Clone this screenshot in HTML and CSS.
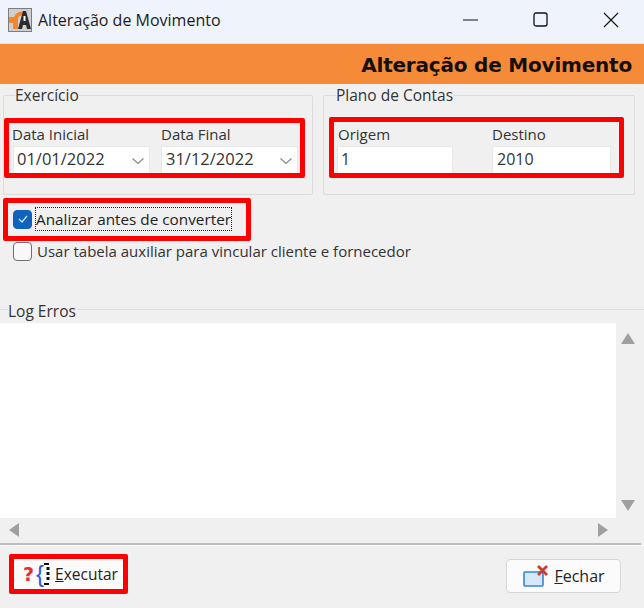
FILE: index.html
```html
<!DOCTYPE html>
<html lang="pt-BR">
<head>
    <meta charset="UTF-8">
    <meta name="viewport" content="width=device-width, initial-scale=1.0">
    <title>Alteração de Movimento</title>
    <link rel="stylesheet" href="styles.css">
</head>
<body>
    <div class="window">
        <div class="titlebar">
            <svg class="app-icon" width="24" height="24" viewBox="0 0 24 24">
                <rect width="24" height="24" fill="#7d7d7d"/>
                <rect x="1" y="1" width="22" height="22" fill="#cfcfcf"/>
                <path d="M1 9h5a8 8 0 0 1 12-4l-2 3a4 4 0 0 0-6 4v9H5v-6H1z" fill="#f2872e"/>
                <path d="M10 21L15 3h3l5 18h-4l-1-4h-3l-1 4z" fill="#2b2b33"/>
                <rect x="15.500" y="8" width="2" height="5" fill="#fff"/>
            </svg>
            <span class="title-text">Alteração de Movimento</span>
            <div class="window-controls">
                <svg width="16" height="16" viewBox="0 0 16 16"><path d="M0 8h15" stroke="#111" fill="none"/></svg>
                <svg width="16" height="16" viewBox="0 0 16 16"><rect x="1" y="1" width="13" height="13" rx="2" stroke="#111" stroke-width="1.300" fill="none"/></svg>
                <svg width="16" height="16" viewBox="0 0 16 16"><path d="M1 1l14 14M15 1L1 15" stroke="#111" stroke-width="1.100" fill="none"/></svg>
            </div>
        </div>

        <div class="banner">Alteração de Movimento</div>

        <div class="groups">
            <fieldset class="group group-exercicio">
                <legend>Exercício</legend>
                <div class="field date-inicial">
                    <label>Data Inicial</label>
                    <div class="input date-input">01/01/2022
                        <svg class="chevron" width="12" height="6" viewBox="0 0 12 6"><path d="M0.500 0.500l5.500 5 5.500-5" stroke="#858585" stroke-width="1.100" fill="none"/></svg>
                    </div>
                </div>
                <div class="field date-final">
                    <label>Data Final</label>
                    <div class="input date-input">31/12/2022
                        <svg class="chevron" width="12" height="6" viewBox="0 0 12 6"><path d="M0.500 0.500l5.500 5 5.500-5" stroke="#858585" stroke-width="1.100" fill="none"/></svg>
                    </div>
                </div>
            </fieldset>

            <fieldset class="group group-plano">
                <legend>Plano de Contas</legend>
                <div class="field origem">
                    <label>Origem</label>
                    <div class="input">1</div>
                </div>
                <div class="field destino">
                    <label>Destino</label>
                    <div class="input">2010</div>
                </div>
            </fieldset>
        </div>

        <div class="options">
            <div class="option">
                <span class="check checked">
                    <svg width="12" height="10" viewBox="0 0 12 10"><path d="M2 5l3 3 5-6" stroke="#cfe0f5" stroke-width="1.300" fill="none"/></svg>
                </span>
                <span class="focused">Analizar antes de converter</span>
            </div>
            <div class="option">
                <span class="check"></span>
                <span class="option-text">Usar tabela auxiliar para vincular cliente e fornecedor</span>
            </div>
        </div>

        <div class="log-header"><span>Log Erros</span></div>

        <div class="log">
            <div class="log-top">
                <div class="log-text"></div>
                <div class="vscroll">
                    <span class="arrow-up"></span>
                    <span class="arrow-down"></span>
                </div>
            </div>
            <div class="hscroll">
                <span class="arrow-left"></span>
                <span class="arrow-right"></span>
            </div>
        </div>

        <div class="footer">
            <div class="btn-run">
                <span class="run-q">?</span><span class="run-b">{</span>
                <svg class="run-d" width="6" height="22" viewBox="0 0 6 22">
                    <path d="M0 1h5M0 21h5" stroke="#111" stroke-width="2"/>
                    <path d="M4 4v15" stroke="#111" stroke-width="3" stroke-dasharray="3 2"/>
                </svg>
                <span class="btn-label"><u>E</u>xecutar</span>
            </div>
            <div class="btn-close">
                <svg width="26" height="22" viewBox="0 0 26 22">
                    <rect x="1" y="7" width="19" height="14" rx="1" fill="#d6e8fa" stroke="#2f86d8" stroke-width="1.600"/>
                    <path d="M15 1l9 9M24 1l-9 9" stroke="#cf3a2e" stroke-width="2.800" fill="none"/>
                </svg>
                <span class="btn-label"><u>F</u>echar</span>
            </div>
        </div>

        <!-- marcacoes vermelhas do print -->
        <div class="mark mark-datas"></div>
        <div class="mark mark-plano"></div>
        <div class="mark mark-analisar"></div>
        <div class="mark mark-executar"></div>
    </div>
</body>
</html>
```

FILE: styles.css
```css
/* Janela */
html, body {
    margin: 0;
    padding: 0;
}

body {
    font-family: "Open Sans", "Noto Sans", sans-serif;
    font-size: 15px;
    color: #222;
    background-color: #f0f0f0;
}

.window {
    position: relative;
    width: 644px;
    height: 608px;
    overflow: hidden;
    display: flex;
    flex-direction: column;
    background-color: #f0f0f0;
}

/* Barra de titulo */
.titlebar {
    height: 39px;
    display: flex;
    align-items: center;
    padding: 0 0 4px 8px;
    background-color: #eff3fb;
    border-bottom: 1px solid #f8d9bd;
}

.app-icon {
    margin-right: 6px;
}

.title-text {
    font-size: 16px;
    color: #1c1c1c;
}

.window-controls {
    margin-left: auto;
    display: flex;
    gap: 54px;
    padding-right: 25px;
}

/* Faixa laranja */
.banner {
    height: 40px;
    line-height: 43px;
    padding-right: 12px;
    text-align: right;
    font-family: "DejaVu Sans", sans-serif;
    font-weight: bold;
    font-size: 20px;
    letter-spacing: -0.2px;
    color: #141008;
    background-color: #f58a38;
}

/* Grupos */
.groups {
    display: flex;
    gap: 10px;
    padding: 1px 9px 0 3px;
}

.group {
    margin: 0;
    padding: 19px 0 0 0;
    height: 110px;
    box-sizing: border-box;
    display: flex;
    border: 1px solid #dcdcdc;
    border-radius: 2px;
}

.group legend {
    padding: 0;
    font-size: 15.500px;
    line-height: 20px;
    color: #333;
}

.group-exercicio {
    width: 310px;
    gap: 12px;
}

.group-exercicio legend {
    margin-left: 11px;
}

.group-plano {
    width: 312px;
    gap: 40px;
}

.group-plano legend {
    margin-left: 12px;
}

.date-inicial {
    margin-left: 8px;
}

.origem {
    margin-left: 14px;
}

.field label {
    display: block;
    font-size: 15px;
    line-height: 20px;
    color: #333;
}

.input {
    box-sizing: border-box;
    height: 27px;
    line-height: 24px;
    padding-left: 3px;
    margin-top: 3px;
    background-color: #fff;
    color: #333;
    font-size: 16px;
    position: relative;
    box-shadow: 0 0 0 1px #e8e8e8;
}

.date-input {
    width: 135px;
    margin-left: 2px;
    font-size: 16.500px;
}

.date-final .date-input {
    margin-left: 1px;
    padding-left: 4px;
}

.origem .input {
    width: 114px;
}

.destino .input {
    width: 117px;
    margin-left: 1px;
    padding-left: 4px;
}

.chevron {
    position: absolute;
    right: 5px;
    top: 11px;
}

/* Opcoes */
.options {
    padding: 8px 0 0 13px;
}

.option {
    display: flex;
    align-items: center;
    height: 32px;
    color: #333;
}

.check {
    box-sizing: border-box;
    width: 19px;
    height: 19px;
    margin-right: 4px;
    display: flex;
    align-items: center;
    justify-content: center;
    background-color: #f8f8f8;
    border: 1.500px solid #6f6f6f;
    border-radius: 4px;
}

.check.checked {
    background-color: #0f62be;
    border-color: #0f62be;
}

.focused {
    outline: 1px dotted #222;
    line-height: 22px;
    font-size: 15.300px;
    color: #222;
}

.option-text {
    margin-left: 1px;
}

/* Log */
.log-header {
    margin-top: 33px;
    height: 23px;
    padding-left: 8px;
    font-size: 15.500px;
    color: #333;
    background: linear-gradient(#dedede, #dedede) no-repeat 0 9px / 100% 1px;
}

.log-header span {
    display: inline-block;
    background-color: #f0f0f0;
    padding-right: 1px;
    line-height: 20px;
}

.log {
    display: flex;
    flex-direction: column;
    height: 220px;
    border-bottom: 2px solid #bcbcbc;
    margin-right: 3px;
}

.log-top {
    flex: 1;
    display: flex;
}

.log-text {
    flex: 1;
    background-color: #fff;
}

.vscroll {
    width: 25px;
    position: relative;
    background-color: #f0f0f0;
}

.hscroll {
    height: 25px;
    position: relative;
    background-color: #f0f0f0;
}

.arrow-up,
.arrow-down,
.arrow-left,
.arrow-right {
    position: absolute;
    width: 0;
    height: 0;
    border-style: solid;
    border-color: transparent;
}

.arrow-up {
    top: 10px;
    left: 5px;
    border-width: 0 7px 11px 7px;
    border-bottom-color: #a0a0a0;
}

.arrow-down {
    bottom: 7px;
    left: 5px;
    border-width: 11px 7px 0 7px;
    border-top-color: #a0a0a0;
}

.arrow-left {
    top: 5px;
    left: 9px;
    border-width: 7px 10px 7px 0;
    border-right-color: #a0a0a0;
}

.arrow-right {
    top: 5px;
    left: 598px;
    border-width: 7px 0 7px 10px;
    border-left-color: #a0a0a0;
}

/* Rodape */
.footer {
    flex: 1;
    display: flex;
    justify-content: space-between;
    align-items: flex-start;
    padding: 12px 23px 0 14px;
    border-top: 1px solid #fafafa;
}

.btn-run {
    width: 109px;
    height: 32px;
    display: flex;
    align-items: center;
    padding-left: 9px;
    box-sizing: border-box;
    background-color: #fbfbfb;
}

.btn-run .btn-label {
    font-size: 15.500px;
}

.run-q {
    font-family: "DejaVu Sans", sans-serif;
    font-weight: bold;
    font-size: 19px;
    color: #ee2b33;
}

.run-b {
    font-family: "Liberation Sans", sans-serif;
    font-size: 24px;
    color: #2f55e8;
    margin-left: 2px;
}

.run-d {
    margin-right: 5px;
}

.btn-close {
    width: 115px;
    height: 34px;
    margin-top: 1px;
    box-sizing: border-box;
    display: flex;
    align-items: center;
    justify-content: center;
    gap: 5px;
    padding-left: 1px;
    background-color: #fbfbfb;
    border: 1px solid #d6d6d6;
    border-radius: 4px;
}

.btn-label {
    font-size: 16px;
    color: #222;
}

/* Marcacoes vermelhas por cima da tela */
.mark {
    position: absolute;
    box-sizing: border-box;
    border: 5px solid #f00;
    border-radius: 2px;
}

.mark-datas {
    left: 4px;
    top: 118px;
    width: 301px;
    height: 60px;
}

.mark-plano {
    left: 329px;
    top: 117px;
    width: 295px;
    height: 61px;
}

.mark-analisar {
    left: 3px;
    top: 198px;
    width: 248px;
    height: 43px;
}

.mark-executar {
    left: 9px;
    top: 554px;
    width: 119px;
    height: 40px;
}
```
